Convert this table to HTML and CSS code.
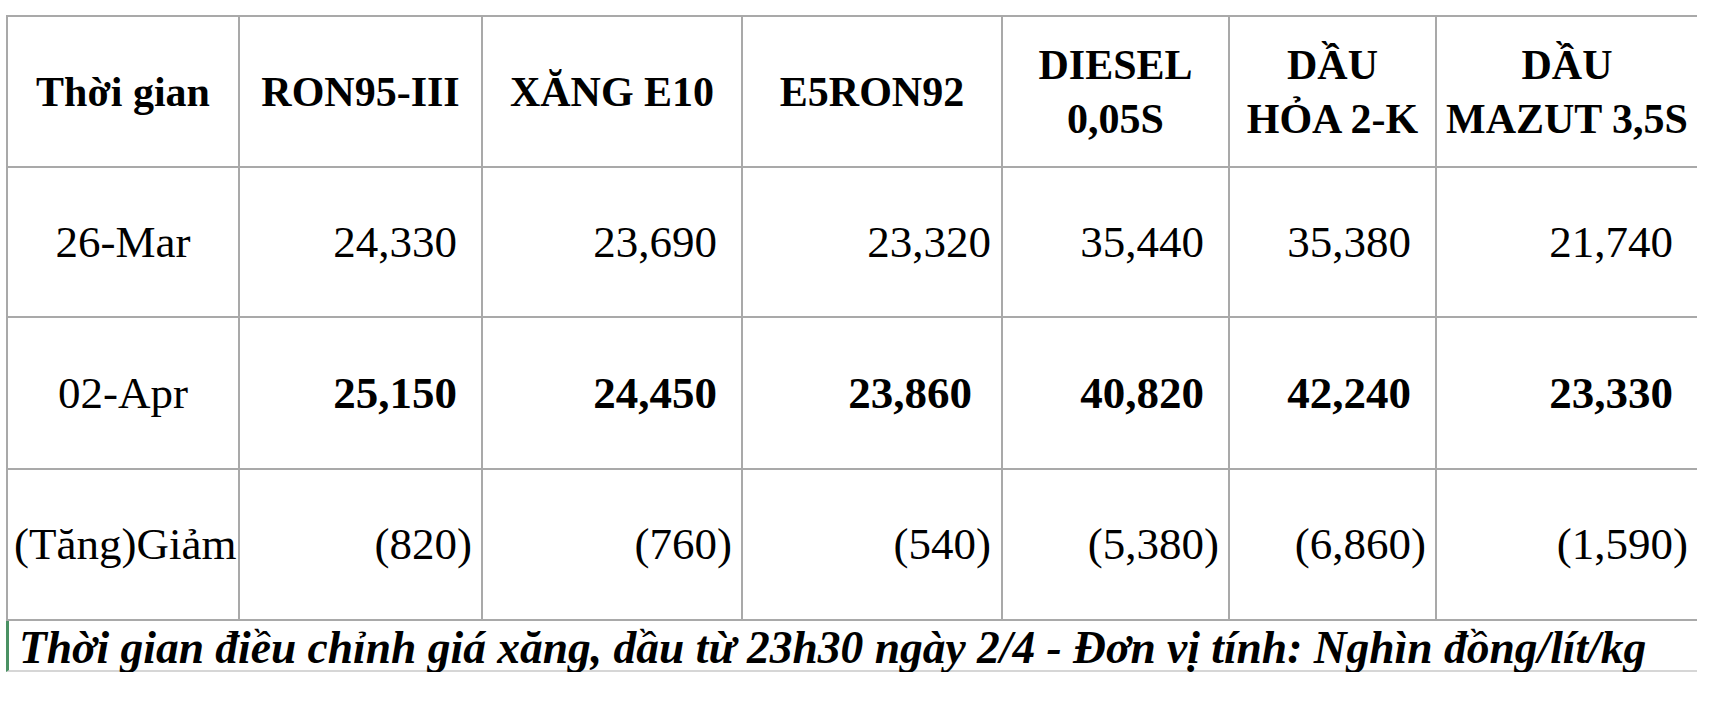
FILE: index.html
```html
<!DOCTYPE html>
<html lang="vi">
<head>
<meta charset="utf-8">
<title>Giá xăng dầu</title>
<link rel="stylesheet" href="styles.css">
</head>
<body>
<div class="sheet">
  <div class="cell head first">Thời gian</div>
  <div class="cell head">RON95-III</div>
  <div class="cell head">XĂNG E10</div>
  <div class="cell head">E5RON92</div>
  <div class="cell head">DIESEL<br>0,05S</div>
  <div class="cell head">DẦU<br>HỎA 2-K</div>
  <div class="cell head last">DẦU<br>MAZUT 3,5S</div>

  <div class="cell label first">26-Mar</div>
  <div class="cell num pos">24,330</div>
  <div class="cell num pos">23,690</div>
  <div class="cell num tight">23,320</div>
  <div class="cell num pos">35,440</div>
  <div class="cell num pos">35,380</div>
  <div class="cell num pos last">21,740</div>

  <div class="cell label first">02-Apr</div>
  <div class="cell num pos bold">25,150</div>
  <div class="cell num pos bold">24,450</div>
  <div class="cell num mid bold">23,860</div>
  <div class="cell num pos bold">40,820</div>
  <div class="cell num pos bold">42,240</div>
  <div class="cell num pos bold last">23,330</div>

  <div class="cell label left first">(Tăng)Giảm</div>
  <div class="cell num neg">(820)</div>
  <div class="cell num neg">(760)</div>
  <div class="cell num neg tightneg">(540)</div>
  <div class="cell num neg">(5,380)</div>
  <div class="cell num neg">(6,860)</div>
  <div class="cell num neg last">(1,590)</div>

  <div class="note">Thời gian điều chỉnh giá xăng, dầu từ 23h30 ngày 2/4 - Đơn vị tính: Nghìn đồng/lít/kg</div>
</div>
</body>
</html>
```
FILE: styles.css
```css
html, body {
  margin: 0;
  padding: 0;
  background: #ffffff;
}
body {
  font-family: "Liberation Serif", "Times New Roman", serif;
  color: #000000;
}
.sheet {
  margin: 15px 0 0 6px;
  width: 1691px;
  display: grid;
  grid-template-columns: 234px 243px 260px 260px 227px 207px 260px;
  grid-template-rows: 151px 150px 152px 151px 51px;
  border-top: 2px solid #a9a9a9;
}
.cell {
  box-sizing: border-box;
  border-right: 2px solid #a9a9a9;
  border-bottom: 2px solid #a9a9a9;
  display: flex;
  align-items: center;
  font-size: 45px;
  line-height: 1;
}
.first {
  border-left: 2px solid #a9a9a9;
}
.last {
  border-right: none;
}
.head {
  justify-content: center;
  text-align: center;
  font-weight: bold;
  font-size: 42px;
  line-height: 54px;
}
.label {
  justify-content: center;
}
.label.left {
  justify-content: flex-start;
  padding-left: 6px;
}
.num {
  justify-content: flex-end;
}
.pos {
  padding-right: 24px;
}
.neg {
  padding-right: 9px;
}
.tight {
  padding-right: 10px;
}
.mid {
  padding-right: 29px;
}
.tightneg {
  padding-right: 10px;
}
.bold {
  font-weight: bold;
}
.note {
  grid-column: 1 / -1;
  box-sizing: border-box;
  border-left: 3px solid #4a9163;
  border-bottom: 2px solid #d6d6d6;
  display: flex;
  align-items: center;
  padding-left: 10px;
  padding-top: 4px;
  font-size: 45.5px;
  font-weight: bold;
  font-style: italic;
  line-height: 1;
  white-space: nowrap;
}
```
